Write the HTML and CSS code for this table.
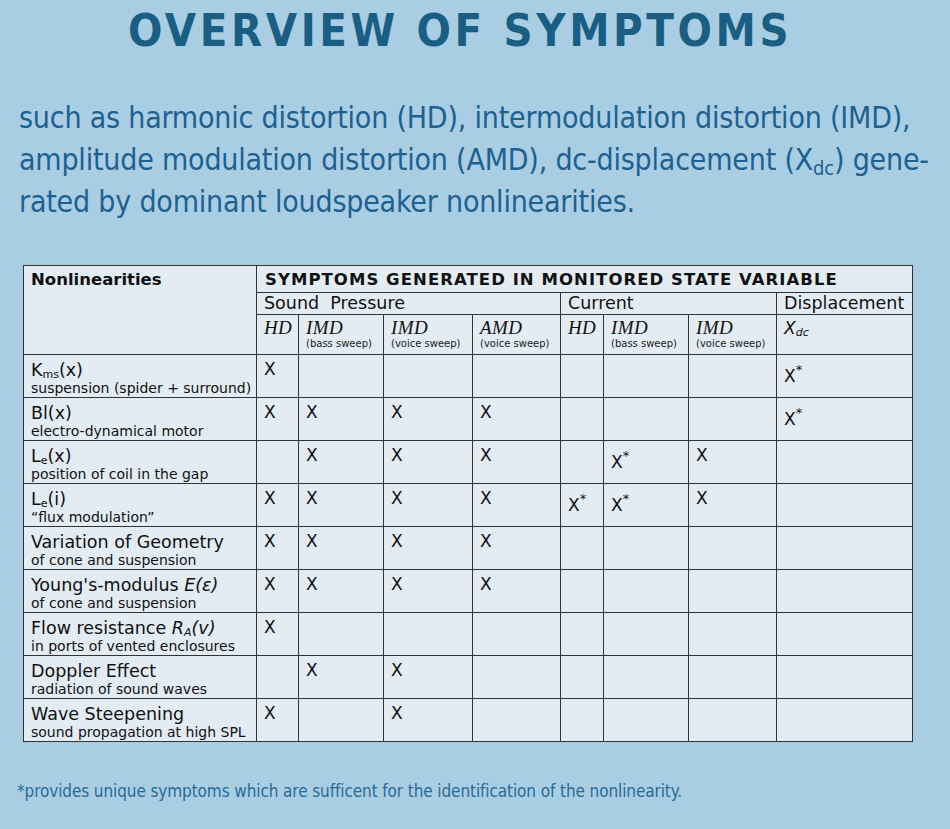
FILE: index.html
```html
<!DOCTYPE html>
<html>
<head>
<meta charset="utf-8">
<link rel="stylesheet" href="styles.css">
</head>
<body>
<div class="page">
  <h1 class="title">OVERVIEW OF SYMPTOMS</h1>
  <p class="lead">such as harmonic distortion (HD), intermodulation distortion (IMD),<br>amplitude modulation distortion (AMD), dc-displacement (X<sub>dc</sub>) gene-<br>rated by dominant loudspeaker nonlinearities.</p>
  <table class="sym">
    <colgroup>
      <col class="c-name"><col class="c-hd"><col class="c-imd1"><col class="c-imd2"><col class="c-amd"><col class="c-hd2"><col class="c-imd3"><col class="c-imd4"><col class="c-x">
    </colgroup>
    <tr class="r-h1">
      <th rowspan="3" class="hname">Nonlinearities</th>
      <th colspan="8" class="hsym">SYMPTOMS GENERATED IN MONITORED STATE VARIABLE</th>
    </tr>
    <tr class="r-h2">
      <td colspan="4" class="grp">Sound&nbsp; Pressure</td>
      <td colspan="3" class="grp">Current</td>
      <td class="grp">Displacement</td>
    </tr>
    <tr class="r-h3">
      <td class="sh"><i class="m">HD</i></td>
      <td class="sh"><i class="m">IMD</i><span class="sw">(bass sweep)</span></td>
      <td class="sh"><i class="m">IMD</i><span class="sw">(voice sweep)</span></td>
      <td class="sh"><i class="m">AMD</i><span class="sw">(voice sweep)</span></td>
      <td class="sh"><i class="m">HD</i></td>
      <td class="sh"><i class="m">IMD</i><span class="sw">(bass sweep)</span></td>
      <td class="sh"><i class="m">IMD</i><span class="sw">(voice sweep)</span></td>
      <td class="sh"><i class="xdc">X<sub>dc</sub></i></td>
    </tr>
    <tr>
      <td class="nm"><span class="n1">K<sub>ms</sub>(x)</span><span class="n2">suspension (spider + surround)</span></td>
      <td>X</td><td></td><td></td><td></td><td></td><td></td><td></td><td><span class="xs">X<sup>*</sup></span></td>
    </tr>
    <tr>
      <td class="nm"><span class="n1">Bl(x)</span><span class="n2">electro-dynamical motor</span></td>
      <td>X</td><td>X</td><td>X</td><td>X</td><td></td><td></td><td></td><td><span class="xs">X<sup>*</sup></span></td>
    </tr>
    <tr>
      <td class="nm"><span class="n1">L<sub>e</sub>(x)</span><span class="n2">position of coil in the gap</span></td>
      <td></td><td>X</td><td>X</td><td>X</td><td></td><td><span class="xs">X<sup>*</sup></span></td><td>X</td><td></td>
    </tr>
    <tr>
      <td class="nm"><span class="n1">L<sub>e</sub>(i)</span><span class="n2">“flux modulation”</span></td>
      <td>X</td><td>X</td><td>X</td><td>X</td><td><span class="xs">X<sup>*</sup></span></td><td><span class="xs">X<sup>*</sup></span></td><td>X</td><td></td>
    </tr>
    <tr>
      <td class="nm"><span class="n1">Variation of Geometry</span><span class="n2">of cone and suspension</span></td>
      <td>X</td><td>X</td><td>X</td><td>X</td><td></td><td></td><td></td><td></td>
    </tr>
    <tr>
      <td class="nm"><span class="n1">Young's-modulus <i>E(ε)</i></span><span class="n2">of cone and suspension</span></td>
      <td>X</td><td>X</td><td>X</td><td>X</td><td></td><td></td><td></td><td></td>
    </tr>
    <tr>
      <td class="nm"><span class="n1">Flow resistance <i>R<sub>A</sub>(v)</i></span><span class="n2">in ports of vented enclosures</span></td>
      <td>X</td><td></td><td></td><td></td><td></td><td></td><td></td><td></td>
    </tr>
    <tr>
      <td class="nm"><span class="n1">Doppler Effect</span><span class="n2">radiation of sound waves</span></td>
      <td></td><td>X</td><td>X</td><td></td><td></td><td></td><td></td><td></td>
    </tr>
    <tr>
      <td class="nm"><span class="n1">Wave Steepening</span><span class="n2">sound propagation at high SPL</span></td>
      <td>X</td><td></td><td>X</td><td></td><td></td><td></td><td></td><td></td>
    </tr>
  </table>
  <p class="note">*provides unique symptoms which are sufficent for the identification of the nonlinearity.</p>
</div>
</body>
</html>
```

FILE: styles.css
```css
html, body {
  margin: 0;
  padding: 0;
  background: #a9cee3;
}
.page {
  width: 950px;
  height: 829px;
  overflow: hidden;
  background: #a9cee3;
}
.title {
  margin: 0;
  padding: 6px 0 0 128px;
  font-family: "DejaVu Sans Condensed", "DejaVu Sans", sans-serif;
  font-weight: bold;
  font-size: 45px;
  line-height: 50px;
  letter-spacing: 3.6px;
  color: #1b5e84;
  white-space: nowrap;
}
.lead {
  margin: 41px 0 0 19px;
  font-family: "DejaVu Sans Condensed", "DejaVu Sans", sans-serif;
  font-size: 30px;
  line-height: 42px;
  letter-spacing: -0.2px;
  color: #1e6090;
  white-space: nowrap;
}
.lead sub {
  font-size: 20px;
  vertical-align: -5px;
  line-height: 0;
}
.sym {
  margin: 42px 0 0 23px;
  width: 889px;
  table-layout: fixed;
  border-collapse: collapse;
  background: #e3ebf3;
  font-family: "DejaVu Sans", "Liberation Sans", sans-serif;
  color: #111;
  border: 1.5px solid #333;
}
.c-name { width: 233px; }
.c-hd { width: 42px; }
.c-imd1 { width: 85px; }
.c-imd2 { width: 89px; }
.c-amd { width: 88px; }
.c-hd2 { width: 43px; }
.c-imd3 { width: 85px; }
.c-imd4 { width: 88px; }
.c-x { width: 136px; }
.sym th, .sym td {
  border: 1px solid #333;
  padding: 4px 0 0 7px;
  vertical-align: top;
  text-align: left;
  font-weight: normal;
  font-size: 17px;
  line-height: 20px;
  white-space: nowrap;
}
.sym tr { height: 43px; }
.sym .r-h1 { height: 27px; }
.sym .r-h2 { height: 22px; }
.sym .r-h3 { height: 40px; }
.sym th.hname {
  font-weight: bold;
  font-size: 16.5px;
  padding-top: 4px;
}
.sym th.hsym {
  font-weight: bold;
  font-size: 16.5px;
  letter-spacing: 1.05px;
  padding-top: 4px;
  padding-left: 8px;
}
.sym td.grp {
  font-size: 17.5px;
  line-height: 20px;
  padding-top: 0;
  padding-left: 7px;
}
.sym td.sh {
  padding-top: 3px;
}
.m {
  display: block;
  font-family: "Liberation Serif", "Times New Roman", serif;
  font-size: 19px;
  line-height: 20px;
  letter-spacing: 0.4px;
}
.sw {
  display: block;
  font-size: 10px;
  line-height: 12px;
  color: #222;
}
.xdc {
  font-family: "DejaVu Sans", sans-serif;
  font-size: 17px;
}
.xdc sub {
  font-size: 11px;
  vertical-align: -2px;
  line-height: 0;
}
.nm .n1 {
  display: block;
  font-size: 17.5px;
  line-height: 22px;
}
.nm .n2 {
  display: block;
  font-size: 14px;
  line-height: 15px;
}
.n1 sub {
  font-size: 11px;
  vertical-align: -2px;
  line-height: 0;
}
.xs {
  display: inline-block;
  padding-top: 7px;
}
.xs sup {
  font-size: 13px;
  line-height: 0;
  vertical-align: 8px;
}
.note {
  margin: 38px 0 0 17px;
  font-family: "DejaVu Sans Condensed", "DejaVu Sans", sans-serif;
  font-size: 17px;
  line-height: 22px;
  letter-spacing: -0.1px;
  color: #2a6a95;
  white-space: nowrap;
}
```
